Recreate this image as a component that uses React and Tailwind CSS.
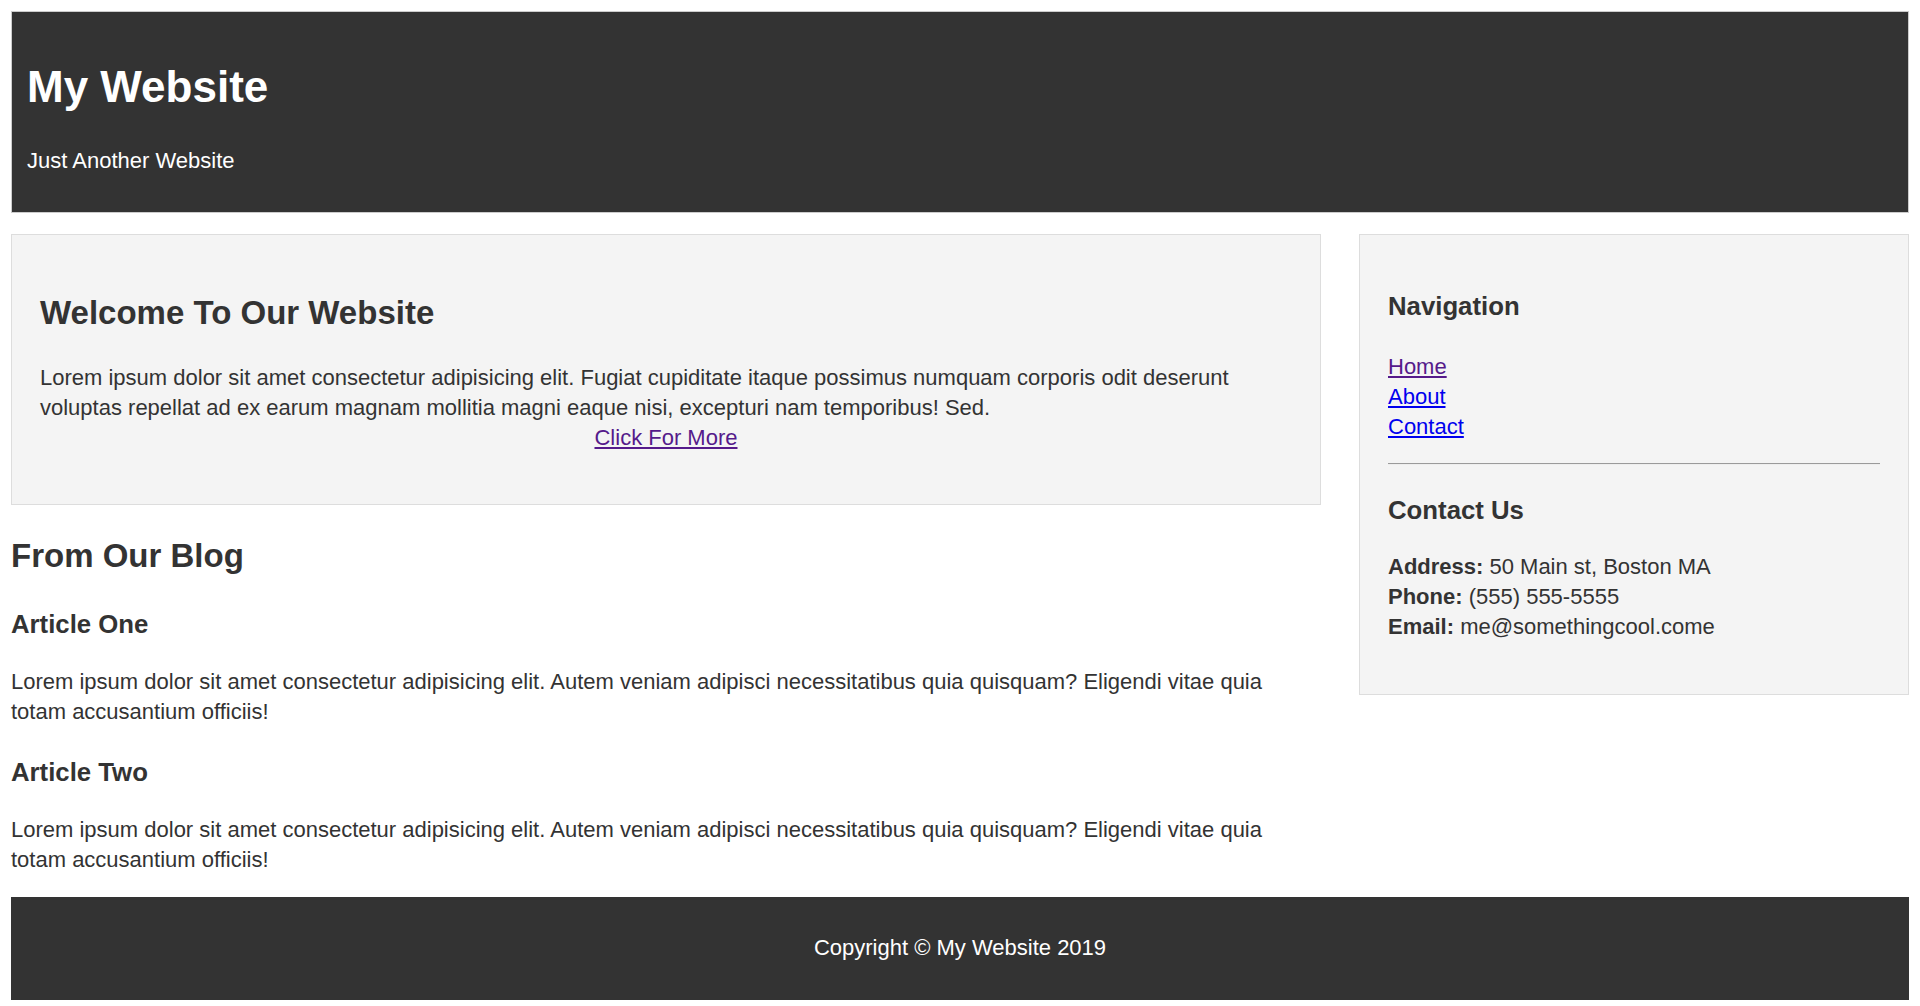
export default function App() {
  return (
    <div
      className="min-h-screen bg-white px-[11px] pt-[11px] pb-[8px] text-[22px] leading-[30px] text-[#333]"
      style={{ fontFamily: '"Liberation Sans", Arial, Helvetica, sans-serif' }}
    >
      {/* Header */}
      <header className="border border-[#ccc] bg-[#333] px-[15px] pt-[15px] pb-[14px] text-white">
        <h1 className="my-[28.5px] text-[44px] font-bold leading-[61px]">My Website</h1>
        <p className="mt-[29.5px] mb-[22px]">Just Another Website</p>
      </header>

      <div className="mt-[20.5px] grid grid-cols-[1fr_550px] gap-x-[38px]">
        {/* Main column */}
        <main>
          <section className="border border-[#ddd] bg-[#f4f4f4] p-[28px]">
            <h2 className="mt-[27.7px] mb-[26.5px] text-[33px] font-bold leading-[46px]">
              Welcome To Our Website
            </h2>
            <p className="mb-[23px]">
              Lorem ipsum dolor sit amet consectetur adipisicing elit. Fugiat cupiditate itaque possimus numquam corporis odit deserunt voluptas repellat ad ex earum magnam mollitia magni eaque nisi, excepturi nam temporibus! Sed.
              <span className="block text-center">
                <a href="#" className="text-[#551a8b] underline">Click For More</a>
              </span>
            </p>
          </section>

          <h2 className="mt-[28.3px] mb-[27.5px] text-[33px] font-bold leading-[46px]">From Our Blog</h2>

          <article>
            <h3 className="mb-[24.2px] text-[25.75px] font-bold leading-[36px]">Article One</h3>
            <p className="mb-[27.8px]">
              Lorem ipsum dolor sit amet consectetur adipisicing elit. Autem veniam adipisci necessitatibus quia quisquam? Eligendi vitae quia totam accusantium officiis!
            </p>
          </article>

          <article>
            <h3 className="mb-[24.2px] text-[25.75px] font-bold leading-[36px]">Article Two</h3>
            <p className="mb-[21.5px]">
              Lorem ipsum dolor sit amet consectetur adipisicing elit. Autem veniam adipisci necessitatibus quia quisquam? Eligendi vitae quia totam accusantium officiis!
            </p>
          </article>
        </main>

        {/* Sidebar */}
        <aside className="self-start border border-[#ddd] bg-[#f4f4f4] p-[28px]">
          <h3 className="mt-[25.4px] mb-[27.8px] text-[25.75px] font-bold leading-[36px]">Navigation</h3>
          <ul className="mb-[21.5px]">
            <li><a href="#" className="text-[#551a8b] underline">Home</a></li>
            <li><a href="#" className="text-[#0000ee] underline">About</a></li>
            <li><a href="#" className="text-[#0000ee] underline">Contact</a></li>
          </ul>
          <hr className="border-t border-b border-t-[#9a9a9a] border-b-[#eee]" />
          <h3 className="mt-[26.8px] mb-[24.2px] text-[25.75px] font-bold leading-[36px]">Contact Us</h3>
          <p className="mb-[23.5px]">
            <strong>Address:</strong> 50 Main st, Boston MA
            <br />
            <strong>Phone:</strong> (555) 555-5555
            <br />
            <strong>Email:</strong> me@somethingcool.come
          </p>
        </aside>
      </div>

      {/* Footer */}
      <footer className="mt-[1px] bg-[#333] px-[15px] py-[14.2px] text-center text-white">
        <p className="my-[22px]">Copyright &copy; My Website 2019</p>
      </footer>
    </div>
  );
}
